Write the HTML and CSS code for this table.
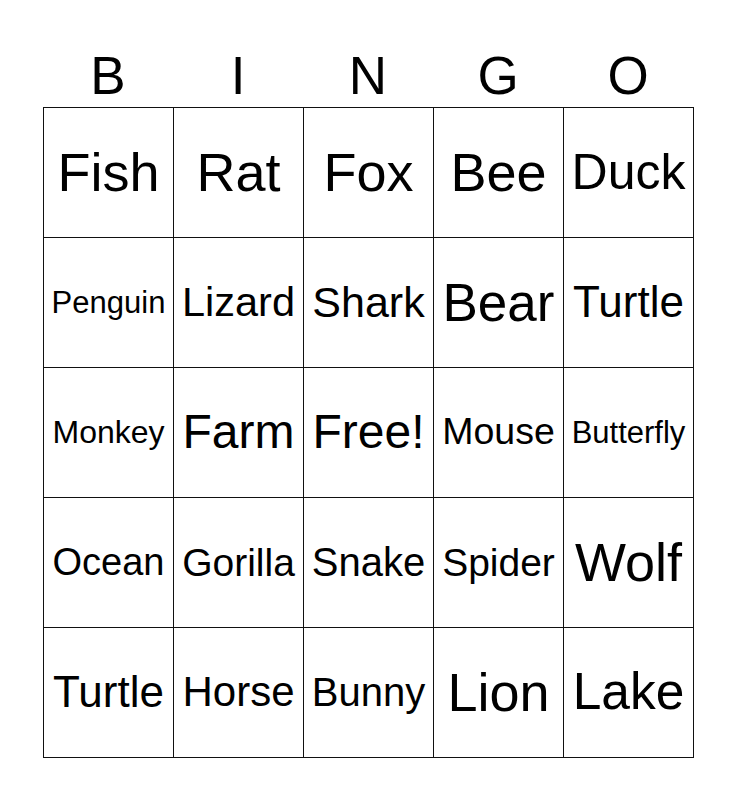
FILE: index.html
```html
<!DOCTYPE html>
<html>
<head>
<meta charset="utf-8">
<link rel="stylesheet" href="styles.css">
</head>
<body>
<div class="card">
  <div class="head">
    <div>B</div><div>I</div><div>N</div><div>G</div><div>O</div>
  </div>
  <div class="grid">
    <div class="cell s54">Fish</div>
    <div class="cell s54">Rat</div>
    <div class="cell s54">Fox</div>
    <div class="cell s54">Bee</div>
    <div class="cell s50">Duck</div>

    <div class="cell s31">Penguin</div>
    <div class="cell s41">Lizard</div>
    <div class="cell s43">Shark</div>
    <div class="cell s53">Bear</div>
    <div class="cell s44">Turtle</div>

    <div class="cell s32">Monkey</div>
    <div class="cell s48">Farm</div>
    <div class="cell s48">Free!</div>
    <div class="cell s37">Mouse</div>
    <div class="cell s31">Butterfly</div>

    <div class="cell s38">Ocean</div>
    <div class="cell s39">Gorilla</div>
    <div class="cell s40">Snake</div>
    <div class="cell s39">Spider</div>
    <div class="cell s54">Wolf</div>

    <div class="cell s44">Turtle</div>
    <div class="cell s42">Horse</div>
    <div class="cell s40">Bunny</div>
    <div class="cell s54">Lion</div>
    <div class="cell s52">Lake</div>
  </div>
</div>
</body>
</html>
```
FILE: styles.css
```css
html, body {
  margin: 0;
  padding: 0;
  background: #fff;
}
body {
  font-family: "Liberation Sans", Arial, sans-serif;
  color: #000;
}
.card {
  padding: 45px 0 0 43px;
  width: 651px;
}
.head {
  display: grid;
  grid-template-columns: repeat(5, 130px);
  height: 62px;
  font-size: 53px;
  line-height: 62px;
  text-align: center;
}
.grid {
  display: grid;
  grid-template-columns: repeat(5, 130px);
  grid-auto-rows: 130px;
  border-left: 1px solid #111;
  border-top: 1px solid #111;
  width: 650px;
}
.cell {
  box-sizing: border-box;
  border-right: 1px solid #111;
  border-bottom: 1px solid #111;
  display: flex;
  align-items: center;
  justify-content: center;
  text-align: center;
  white-space: nowrap;
  line-height: 1;
  padding-bottom: 1px;
}
.s31 { font-size: 31px; }
.s32 { font-size: 32px; }
.s37 { font-size: 37.5px; }
.s38 { font-size: 38px; }
.s39 { font-size: 39px; }
.s40 { font-size: 40px; }
.s41 { font-size: 41.5px; }
.s42 { font-size: 42px; }
.s43 { font-size: 43px; }
.s44 { font-size: 44px; }
.s48 { font-size: 48px; }
.s50 { font-size: 50px; }
.s52 { font-size: 51.5px; }
.s53 { font-size: 53px; }
.s54 { font-size: 54px; }
```
